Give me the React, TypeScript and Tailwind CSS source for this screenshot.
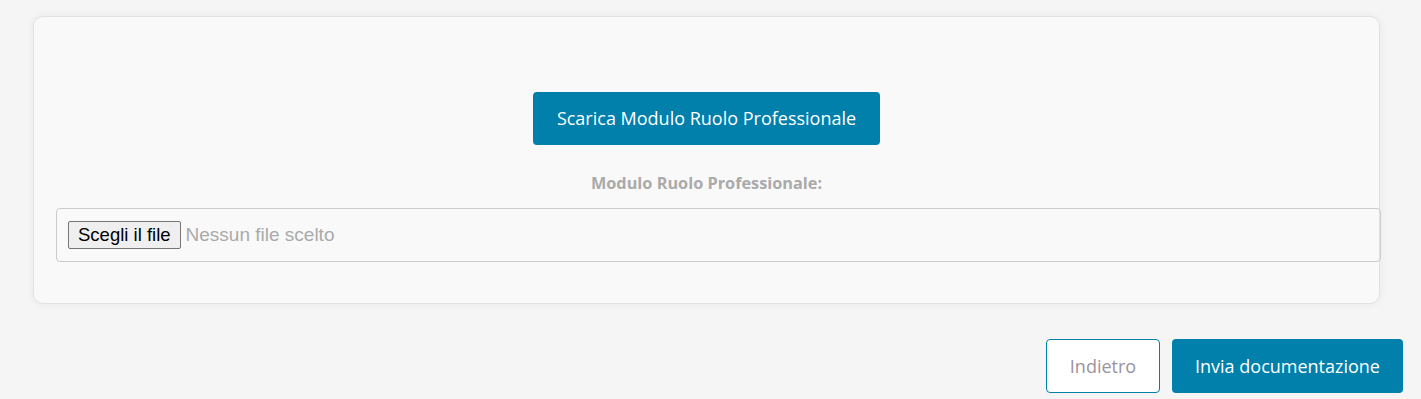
export default function App() {
  return (
    <div className="min-h-[399px] bg-[#f5f5f5] font-['Open_Sans',sans-serif] pt-4 pl-[33px] pr-[18px]">
      <div className="w-[1347px] rounded-[10px] border border-[#e2e2e2] bg-[#f9f9f9] shadow-[0_0_8px_rgba(0,0,0,0.06)] pt-[75px] pb-[41px] px-[22px]">
        <div className="flex flex-col items-center">
          <button className="h-[53px] px-6 rounded-[4px] bg-[#0080ab] text-white text-[18px]">
            Scarica Modulo Ruolo Professionale
          </button>
          <div className="mt-[26px] text-[16.3px] font-bold text-[#aaaaaa] leading-6">
            Modulo Ruolo Professionale:
          </div>
        </div>
        <div className="mt-[13px] mr-[-24px] h-[54px] rounded-[4px] border border-[#cccccc] flex items-center pl-[11px]">
          <span className="h-[28px] px-[9px] flex items-center rounded-[2px] border border-[#767676] bg-[#efefef] text-black text-[18.5px] font-['Liberation_Sans',Arial,sans-serif]">
            Scegli il file
          </span>
          <span className="ml-[5px] text-[#aaaaaa] text-[19px] font-['Liberation_Sans',Arial,sans-serif]">
            Nessun file scelto
          </span>
        </div>
      </div>
      <div className="flex justify-end gap-[12px] mt-[35px]">
        <button className="h-[54px] w-[114px] rounded-[4px] border border-[#0080ab] bg-white text-[#9a93a0] text-[18px]">
          Indietro
        </button>
        <button className="h-[54px] w-[231px] rounded-[4px] bg-[#0080ab] text-white text-[18px]">
          Invia documentazione
        </button>
      </div>
    </div>
  );
}
